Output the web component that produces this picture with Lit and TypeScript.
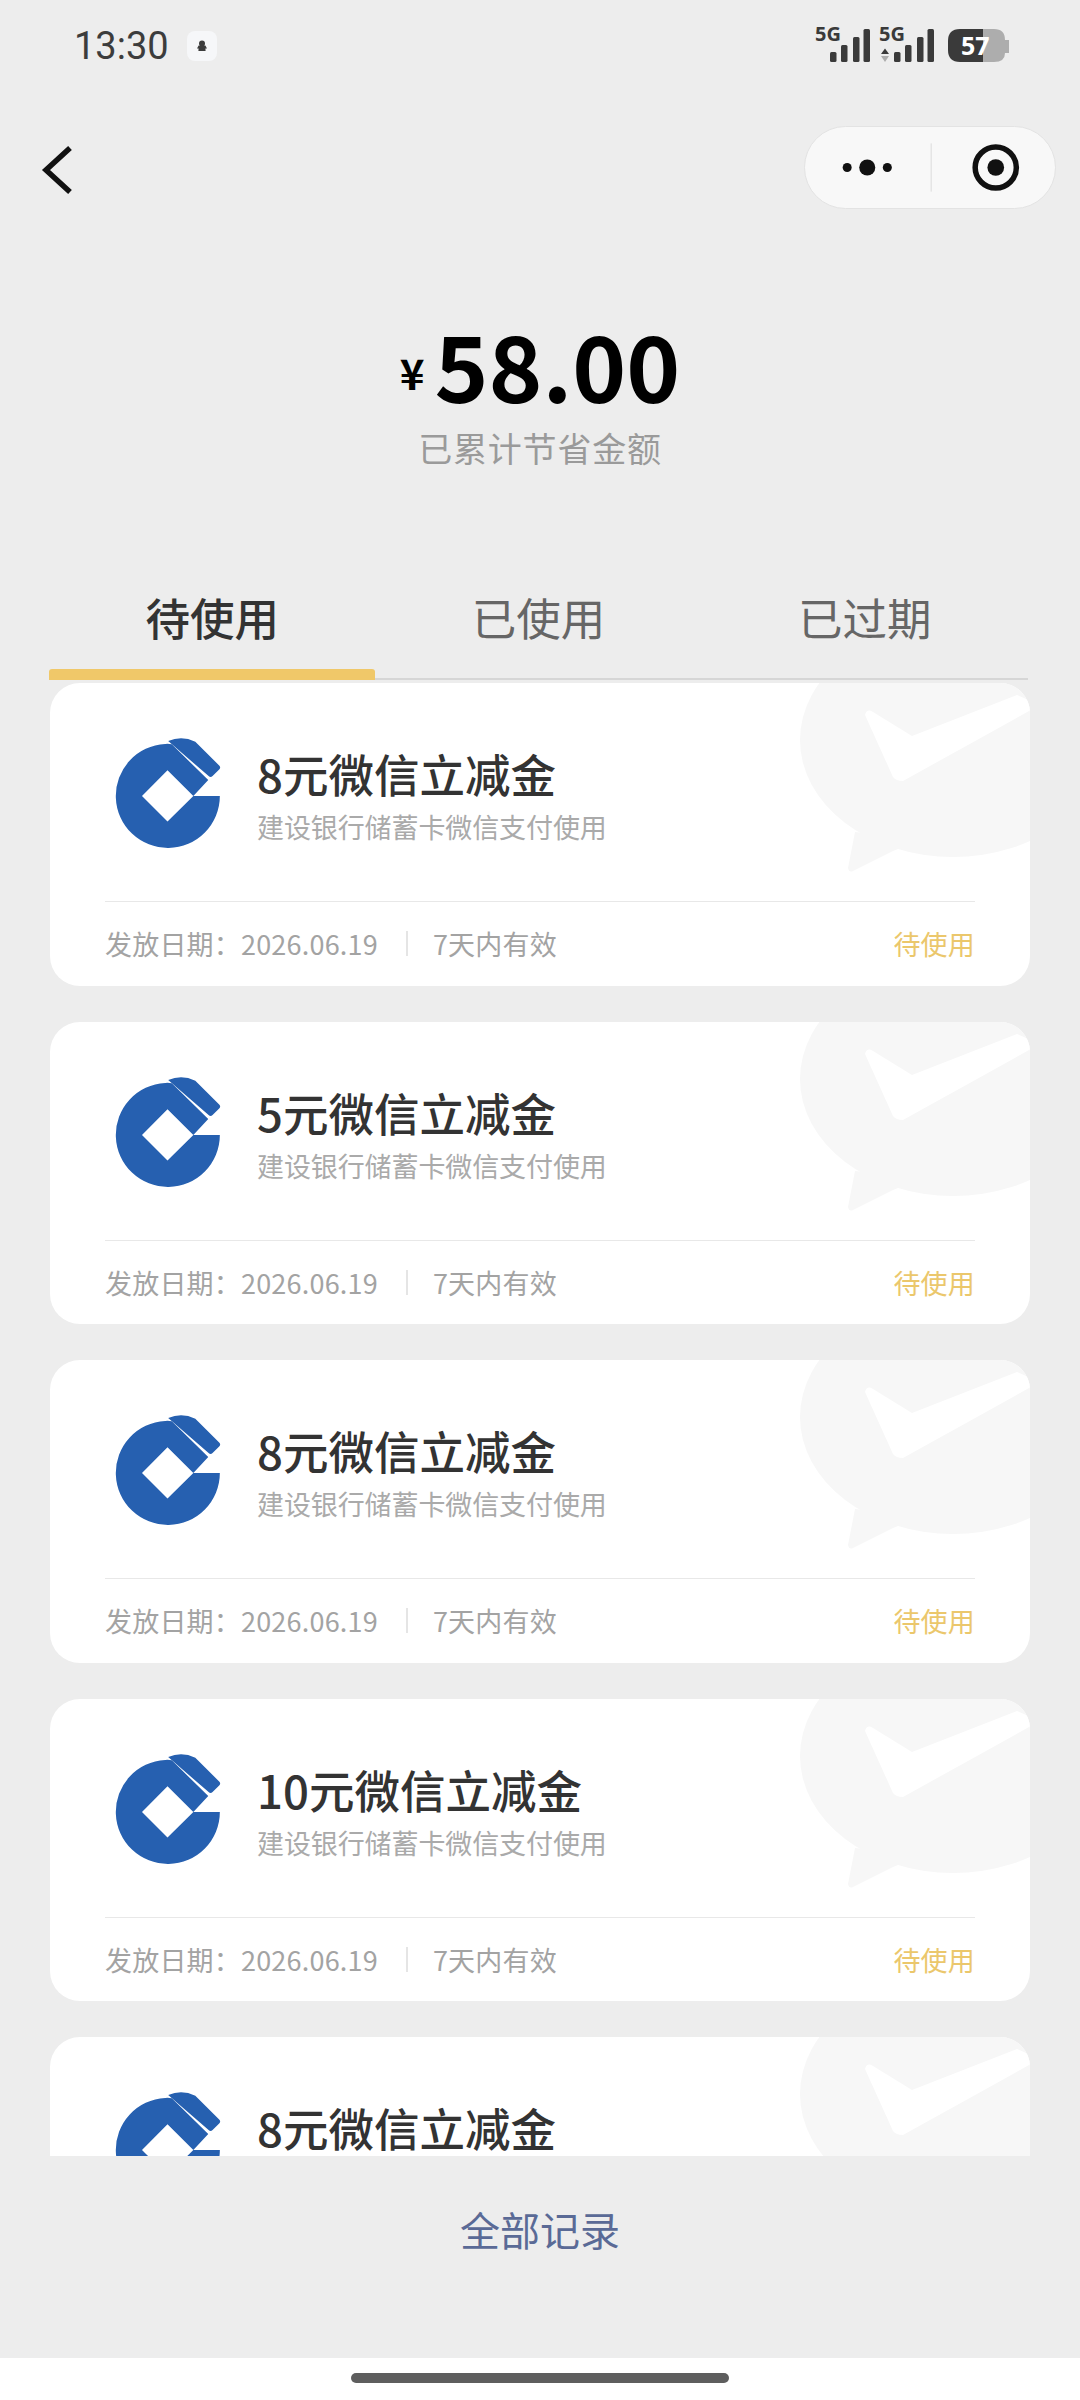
import { LitElement, html, css, svg } from 'lit';
import { customElement } from 'lit/decorators.js';

const coupons = [8, 5, 8, 10, 8];

const bankLogo = html`
  <svg class="logo" viewBox="75 53 317 332">
    <path fill="#2660b0" fill-rule="evenodd" d="M390 228A157 157 0 1 1 225 71Q236 70 245 72L355 180L310 228ZM232 150L155 228L232 305L310 228Z"></path>
    <path fill="#2660b0" d="M234 62Q275 44 316 64L388 136Q394 142 388 148L368 168Q362 174 356 168Z"></path>
  </svg>
`;

const bars = (offset: number) => svg`
  <rect x=${offset} y="52" width="6.5" height="10" rx="1.5"></rect>
  <rect x=${offset + 11} y="45" width="6.5" height="17" rx="1.5"></rect>
  <rect x=${offset + 23} y="37" width="6.5" height="25" rx="1.5"></rect>
  <rect x=${offset + 33.5} y="29" width="6.5" height="33" rx="1.5"></rect>
`;

@customElement('app-root')
export class AppRoot extends LitElement {
  static styles = css`
    :host {
      display: block;
      width: 1080px;
      height: 2400px;
      font-family: "Noto Sans CJK SC", "Noto Sans", sans-serif;
    }
    .page {
      height: 2400px;
      display: flex;
      flex-direction: column;
      background: #ededed;
    }
    .status {
      height: 92px;
      flex: none;
      display: flex;
      align-items: center;
      padding-left: 74px;
      box-sizing: border-box;
      position: relative;
    }
    .time {
      font-family: Roboto, sans-serif;
      font-size: 38px;
      color: #3c3c3c;
      line-height: 92px;
    }
    .chip {
      width: 30px;
      height: 30px;
      margin-left: 18px;
      border-radius: 8px;
      background: #f6f7f9;
      display: flex;
      align-items: center;
      justify-content: center;
    }
    .signals {
      position: absolute;
      left: 800px;
      top: 0;
    }
    .nav {
      height: 83px;
      flex: none;
      margin-top: 34px;
      display: flex;
      align-items: center;
      justify-content: space-between;
      padding: 0 24px 0 41px;
    }
    .back {
      margin-top: 5px;
    }
    .capsule {
      width: 252px;
      height: 83px;
      box-sizing: border-box;
      border: 1.5px solid #e3e3e3;
      border-radius: 42px;
      background: #f8f8f8;
    }
    .hero {
      flex: none;
      margin-top: 102px;
      text-align: center;
    }
    .amount {
      display: flex;
      justify-content: center;
      align-items: center;
      height: 105px;
      line-height: 105px;
      color: #000;
      font-weight: 700;
    }
    .yen {
      font-size: 42px;
      margin: 16px 10px 0 0;
    }
    .num {
      font-size: 91.5px;
    }
    .label {
      margin-top: 7px;
      font-size: 34px;
      letter-spacing: 0.8px;
      line-height: 50px;
      color: #9a9a9a;
    }
    .tabs {
      flex: none;
      height: 94px;
      margin: 113px 52px 0 49px;
      display: grid;
      grid-template-columns: repeat(3, 1fr);
      border-bottom: 2px solid #d6d6d6;
      box-sizing: border-box;
      position: relative;
    }
    .tab {
      font-size: 44.5px;
      line-height: 62px;
      text-align: center;
      color: #666;
      position: relative;
    }
    .tab.active {
      color: #333;
      font-weight: 500;
    }
    .tab.active::after {
      content: "";
      position: absolute;
      left: 0;
      right: 0;
      top: 83px;
      height: 11px;
      background: #f0c869;
      border-radius: 3px 3px 0 0;
    }
    .list {
      flex: 1;
      min-height: 0;
      overflow: hidden;
      margin: 3px 50px 0;
      display: flex;
      flex-direction: column;
      gap: 36px;
    }
    .card {
      flex: none;
      height: 302.5px;
      box-sizing: border-box;
      padding: 0 55px;
      background: #fff;
      border-radius: 30px;
      position: relative;
      overflow: hidden;
    }
    .mark {
      position: absolute;
      left: 0;
      top: 0;
    }
    .main {
      height: 219px;
      box-sizing: border-box;
      padding: 55px 0 0 10px;
      display: flex;
      gap: 36px;
      border-bottom: 1.5px solid #e8e8e8;
      position: relative;
    }
    .logo {
      width: 106px;
      height: 110px;
      flex: none;
    }
    .title {
      margin-top: 10px;
      font-size: 45.5px;
      line-height: 50px;
      font-weight: 500;
      color: #333;
    }
    .sub {
      margin-top: 11px;
      font-size: 27px;
      line-height: 36px;
      letter-spacing: -0.1px;
      color: #aaa;
    }
    .foot {
      height: 83px;
      display: flex;
      align-items: center;
      font-size: 27px;
      letter-spacing: 0.2px;
      color: #a3a3a3;
      position: relative;
    }
    .sep {
      width: 2px;
      height: 25px;
      margin: 0 25px 0 28px;
      background: #e5e5e5;
    }
    .state {
      margin-left: auto;
      color: #ebc76c;
    }
    .all {
      flex: none;
      height: 202px;
      box-sizing: border-box;
      padding-top: 45px;
      text-align: center;
      font-size: 40px;
      line-height: 56px;
      color: #5a6a96;
    }
    .home {
      flex: none;
      height: 42px;
      background: #fff;
      display: flex;
      justify-content: center;
      padding-top: 15px;
      box-sizing: border-box;
    }
    .home div {
      width: 378px;
      height: 10px;
      border-radius: 5px;
      background: #5e5e5e;
    }
  `;

  render() {
    return html`
      <div class="page">
        <div class="status">
          <span class="time">13:30</span>
          <span class="chip">
            <svg width="12" height="12" viewBox="0 0 12 12" fill="#3c3c3c">
              <circle cx="6" cy="3.4" r="3"></circle>
              <path d="M2.6 5.5H9.4L11 8.6 9.4 8.4 9.6 11H2.4L2.6 8.4 1 8.6Z"></path>
            </svg>
          </span>
          <svg class="signals" width="220" height="92" viewBox="800 0 220 92" fill="#3a3a3a">
            <text x="815" y="41" font-size="20" font-weight="700" font-family="Noto Sans, sans-serif" textLength="26">5G</text>
            ${bars(830)}
            <text x="879" y="41" font-size="20" font-weight="700" font-family="Noto Sans, sans-serif" textLength="26">5G</text>
            <path d="M885 48.500L889 54H881Z"></path>
            <path d="M881 56H889L885 62Z" fill="#adadad"></path>
            ${bars(894)}
            <path d="M983 29H994Q1005 29 1005 40H1009V53H1005Q1005 62 994 62H983Z" fill="#adadad"></path>
            <path d="M983 29H960Q948 29 948 41V50Q948 62 960 62H983Z"></path>
            <text x="961" y="55" font-size="25" font-weight="700" fill="#fff" font-family="Noto Sans, sans-serif">57</text>
          </svg>
        </div>
        <div class="nav">
          <svg class="back" width="32" height="50" viewBox="0 0 32 50" fill="none" stroke="#111" stroke-width="5.5">
            <path d="M29 3L5 25L29 47"></path>
          </svg>
          <svg class="capsule" viewBox="0 0 249 80">
            <circle cx="42" cy="40" r="4.500" fill="#111"></circle>
            <circle cx="62" cy="40" r="8" fill="#111"></circle>
            <circle cx="82" cy="40" r="4.500" fill="#111"></circle>
            <rect x="125" y="16" width="1.500" height="48" fill="#e5e5e5"></rect>
            <circle cx="190" cy="40" r="20.500" fill="none" stroke="#111" stroke-width="5.500"></circle>
            <circle cx="190" cy="40" r="8.300" fill="#111"></circle>
          </svg>
        </div>
        <div class="hero">
          <div class="amount"><span class="yen">¥</span><span class="num">58.00</span></div>
          <div class="label">已累计节省金额</div>
        </div>
        <div class="tabs">
          <div class="tab active">待使用</div>
          <div class="tab">已使用</div>
          <div class="tab">已过期</div>
        </div>
        <div class="list">
          ${coupons.map(
            (n) => html`
              <div class="card">
                <svg class="mark" width="980" height="302" viewBox="50 683 980 302">
                  <ellipse cx="953" cy="740" rx="153" ry="117" fill="#f7f7f7"></ellipse>
                  <path d="M855 832L848 868Q849 873 853 871L893 851L920 840Z" fill="#f7f7f7"></path>
                  <path d="M865 715Q867 708 873 712L912 736L1017 695L1040 705L903 781Q896 781 893 777Z" fill="#fff"></path>
                </svg>
                <div class="main">
                  ${bankLogo}
                  <div>
                    <div class="title">${n}元微信立减金</div>
                    <div class="sub">建设银行储蓄卡微信支付使用</div>
                  </div>
                </div>
                <div class="foot">
                  <span>发放日期：2026.06.19</span>
                  <span class="sep"></span>
                  <span>7天内有效</span>
                  <span class="state">待使用</span>
                </div>
              </div>
            `
          )}
        </div>
        <div class="all">全部记录</div>
        <div class="home"><div></div></div>
      </div>
    `;
  }
}
